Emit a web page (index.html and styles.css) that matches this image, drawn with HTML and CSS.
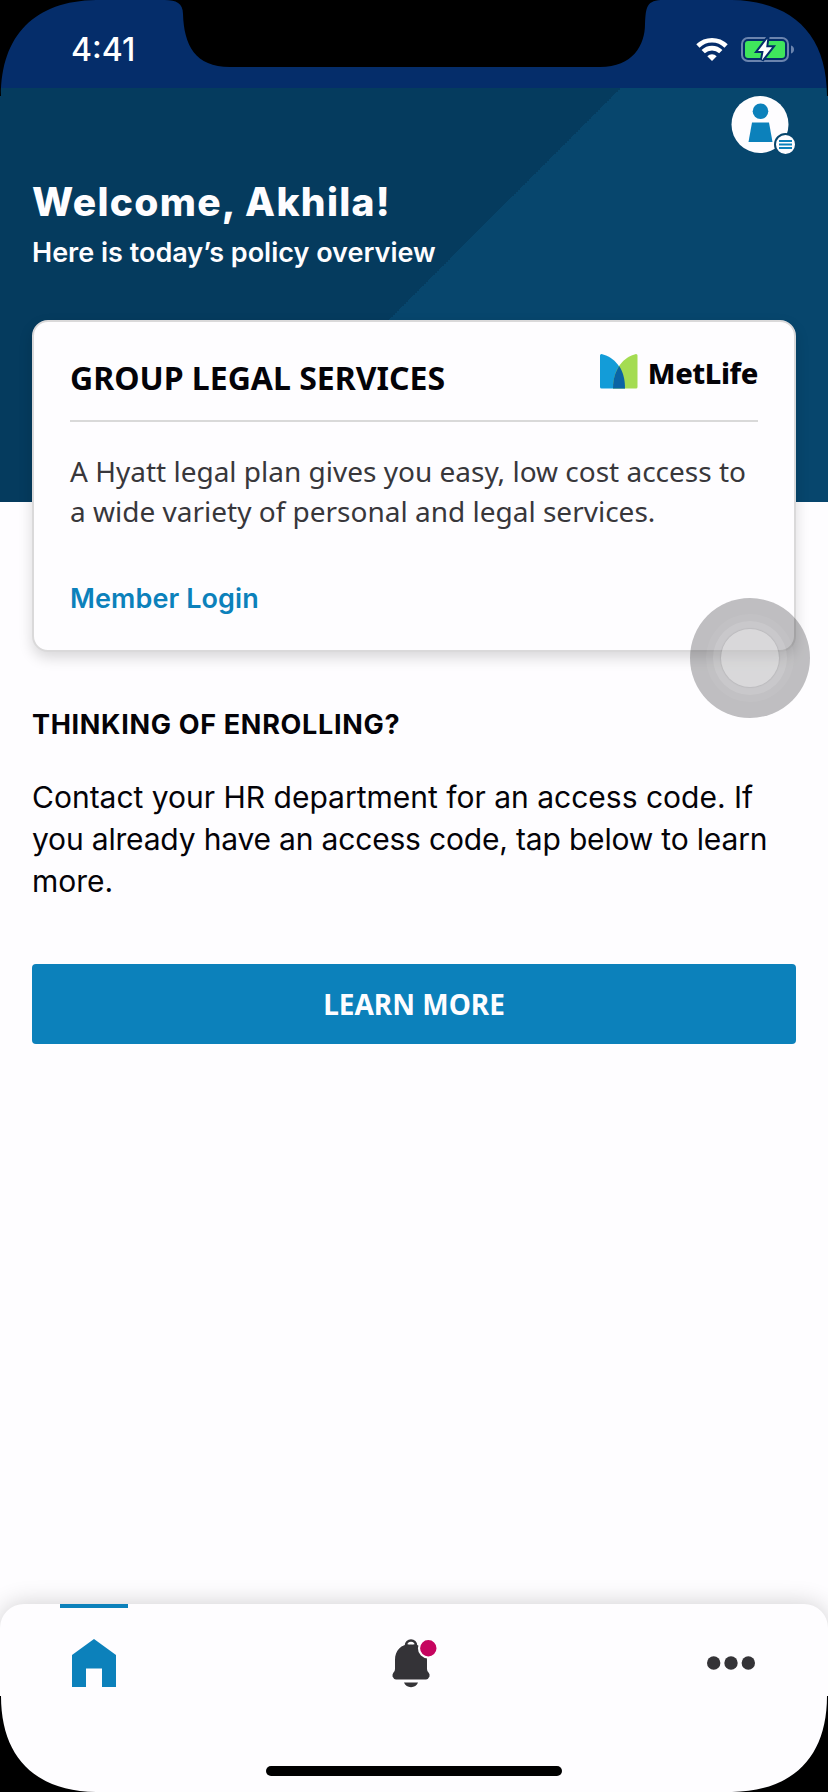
FILE: index.html
```html
<!DOCTYPE html>
<html lang="en">
<head>
<meta charset="utf-8">
<title>Policy overview</title>
<link rel="stylesheet" href="styles.css">
</head>
<body>
<div class="screen">
  <div class="status">
    <span class="time">4:41</span>
    <div class="status-icons">
      <svg class="wifi" width="32" height="24" viewBox="0 0 32 24">
        <g fill="none" stroke="#fff" stroke-width="4.6">
          <path d="M1.9 9a20 20 0 0 1 28.2 0"/>
          <path d="M7.2 14.7a12.500 12.500 0 0 1 17.600 0"/>
        </g>
        <path d="M16 24l-4.700-4.700a6.700 6.700 0 0 1 9.400 0z" fill="#fff"/>
      </svg>
      <svg class="battery" width="54" height="25" viewBox="0 0 54 25">
        <rect x="1" y="1" width="46" height="23" rx="6" fill="none" stroke="#6b84ae" stroke-width="2"/>
        <path d="M50 8.500v8c1.800-.6 3-2 3-4s-1.200-3.400-3-4z" fill="#6b84ae"/>
        <rect x="4" y="4" width="40" height="17" rx="3" fill="#3fe65c"/>
        <path d="M26.300 1.800L17 14h5.600l-1.700 9.200L31 10.300h-5.800z" fill="#fff" stroke="#052d6a" stroke-width="4" paint-order="stroke"/>
      </svg>
    </div>
  </div>
  <header class="hero">
    <div class="profile">
      <svg width="66" height="60" viewBox="0 0 66 60">
        <circle cx="30" cy="28.500" r="28.500" fill="#fefdff"/>
        <circle cx="30.500" cy="15.200" r="7.800" fill="#0c81bb"/>
        <path d="M22 26.500h17L42.500 46h-24z" fill="#0c81bb"/>
        <circle cx="55.500" cy="48.500" r="10.500" fill="#fefdff" stroke="#07466d" stroke-width="2"/>
        <path d="M49 45h13M49 48.500h13M49 52h13" stroke="#0c81bb" stroke-width="2"/>
      </svg>
    </div>
    <h1 class="welcome">Welcome, Akhila!</h1>
    <p class="subtitle">Here is today’s policy overview</p>
  </header>
  <main class="content">
    <section class="card">
      <div class="card-head">
        <h2 class="card-title">GROUP LEGAL SERVICES</h2>
        <div class="brand">
          <svg width="38" height="35" viewBox="0 0 38 35">
            <path d="M1.500 0C14 3 25 14 25 34.500H1.500Q0 34.500 0 33V1.500Q0 0 1.500 0z" fill="#139cd8"/>
            <path d="M36 0C24 3 13 14 13 34.500h23q1.500 0 1.500-1.500V1.500Q37.500 0 36 0z" fill="#a4dc52"/>
            <path d="M19.200 12C15.300 18 13 25 13 34.500h12C25 25 23 18 19.200 12z" fill="#0a64a4"/>
          </svg>
          <span class="brand-name">MetLife</span>
        </div>
      </div>
      <p class="card-text">A Hyatt legal plan gives you easy, low cost access to<br>a wide variety of personal and legal services.</p>
      <a class="login">Member Login</a>
    </section>
    <h3 class="enroll-title">THINKING OF ENROLLING?</h3>
    <p class="enroll-text">Contact your HR department for an access code. If<br><span class="tight">you already have an access code, tap below to learn</span><br>more.</p>
    <button class="cta">LEARN MORE</button>
  </main>
  <nav class="tabs">
    <div class="tab tab-active">
      <svg width="44" height="48" viewBox="0 0 44 48"><path d="M22 0l22 16v32H30V29.500H14V48H0V16z" fill="#0c81bb"/></svg>
    </div>
    <div class="tab tab-bell">
      <svg width="47" height="49" viewBox="0 0 47 49">
        <path d="M14 8V6.500a5 5 0 0 1 10 0V8" fill="none" stroke="#343337" stroke-width="2.600"/>
        <path d="M19 5c10 0 16 6.500 16 16v9q0 2 1.500 3.500 1.500 1.500 1 4Q36.500 40 34 40.500H4Q1.500 40 .5 37.500q-.3-2.500 1-4Q3 32 3 30v-9C3 11.500 9 5 19 5z" fill="#343337"/>
        <path d="M12 43.500h14c-1.200 2.800-3.600 4.700-7 4.700s-5.800-1.900-7-4.700z" fill="#343337"/>
        <path d="M16.200 5.500a2.900 2.600 0 0 1 5.600 0z" fill="#fefdff"/>
        <circle cx="36.300" cy="9.200" r="9.300" fill="#c6045f" stroke="#fefdff" stroke-width="2.200"/>
      </svg>
    </div>
    <div class="tab tab-more">
      <svg width="48" height="14" viewBox="0 0 48 14" fill="#343337"><circle cx="6.700" cy="7" r="6.700"/><circle cx="24" cy="7" r="6.700"/><circle cx="41.300" cy="7" r="6.700"/></svg>
    </div>
    <div class="home-bar"></div>
  </nav>
  <div class="touch"><div class="touch-a"><div class="touch-b"><div class="touch-c"></div></div></div></div>
  <svg class="frame" width="828" height="1792" viewBox="0 0 828 1792">
    <path d="M0 0H96C35 1 1 35 1 96H0z"/>
    <path d="M828 0h-96c61 1 95 35 95 96h1z"/>
    <path d="M0 1792h96c-61-1-95-35-95-96H0z"/>
    <path d="M828 1792h-96c61-1 95-35 95-96h1z"/>
    <path d="M165 0C176 0 183 3 183 14C184 45 195 67 230 67H600C633 67 645 45 645 24C646 7 646 0 664 0z"/>
  </svg>
</div>
</body>
</html>
```
FILE: styles.css
```css
* { box-sizing: border-box; }
body { margin: 0; background: #000; }
h1, h2, h3, p { margin: 0; white-space: nowrap; }
svg { display: block; }

.screen {
  position: relative;
  display: flex;
  flex-direction: column;
  width: 828px;
  height: 1792px;
  overflow: hidden;
  background: #fefdff;
  font-family: Inter, "Liberation Sans", sans-serif;
  color: #040308;
}
.frame { position: absolute; inset: 0; pointer-events: none; }

.status {
  display: flex;
  justify-content: space-between;
  align-items: flex-start;
  height: 88px;
  padding: 37px 33px 0 71px;
  background: #052d6a;
}
.time { color: #fff; font-size: 32px; font-weight: 500; line-height: 26px; }
.status-icons { display: flex; gap: 13px; }

.hero {
  height: 414px;
  padding: 8px 32px 0;
  color: #fefdff;
  background: linear-gradient(135deg, #053b5e 50%, #07466d 50%);
}
.profile { display: flex; justify-content: flex-end; }
.welcome { margin-top: 22px; font-size: 39px; line-height: 48px; font-weight: 800; letter-spacing: 1.3px; }
.subtitle { margin-top: 11px; font-size: 27px; line-height: 32px; font-weight: 600; }

.content { display: flex; flex-direction: column; margin-top: -182px; padding: 0 32px; }
.card {
  height: 332px;
  padding: 32px 36px 0 36px;
  border: 2px solid #dad9da;
  border-radius: 16px;
  background: #fefdff;
  box-shadow: 0 6px 14px rgba(0, 0, 0, .15);
}
.card-head {
  display: flex;
  justify-content: space-between;
  height: 68px;
  border-bottom: 2px solid #d9d9d9;
}
.card-title { font: 700 32px/47px "Noto Sans", sans-serif; }
.brand { display: flex; gap: 10px; }
.brand-name { font: 800 29px/37px "Noto Sans", sans-serif; letter-spacing: -.4px; }
.card-text { margin-top: 29px; font: 400 28px/40px "Noto Sans", sans-serif; color: #38373b; }
.login { display: block; margin-top: 52px; font-size: 27px; line-height: 32px; font-weight: 600; letter-spacing: .1px; color: #0c81bb; }
.enroll-title { margin-top: 57px; font-size: 27px; line-height: 32px; font-weight: 700; letter-spacing: .68px; }
.enroll-text { margin-top: 35px; font-size: 30px; line-height: 42px; }
.tight { letter-spacing: -.18px; }
.cta {
  height: 80px;
  margin-top: 62px;
  border: 0;
  border-radius: 4px;
  background: #0c81bb;
  color: #fefdff;
  font: 700 28px/80px "Noto Sans", sans-serif;
  padding: 0;
}

.tabs {
  position: relative;
  display: flex;
  justify-content: space-between;
  align-items: flex-start;
  height: 188px;
  margin-top: auto;
  padding: 0 60px;
  border-radius: 24px 24px 0 0;
  background: #fefdff;
  box-shadow: 0 0 24px rgba(0, 0, 0, .19);
}
.tab { display: flex; justify-content: center; width: 68px; height: 120px; padding-top: 35px; }
.tab-active { padding-top: 31px; border-top: 4px solid #0c81bb; }
.tab-bell { padding-left: 9px; }
.tab-more { padding-top: 52px; width: 74px; }
.home-bar {
  position: absolute;
  left: 266px;
  bottom: 16px;
  width: 296px;
  height: 10px;
  border-radius: 5px;
  background: #000;
}

.touch, .touch-a, .touch-b, .touch-c { display: flex; align-items: center; justify-content: center; border-radius: 50%; }
.touch { position: absolute; left: 690px; top: 598px; width: 120px; height: 120px; background: rgba(4, 3, 8, .25); }
.touch-a { width: 88px; height: 88px; background: rgba(255, 255, 255, .06); }
.touch-b { width: 74px; height: 74px; background: rgba(255, 255, 255, .12); }
.touch-c { width: 58px; height: 58px; background: rgba(255, 255, 255, .3); box-shadow: 0 0 1px 1px rgba(0, 0, 0, .06); }
```
